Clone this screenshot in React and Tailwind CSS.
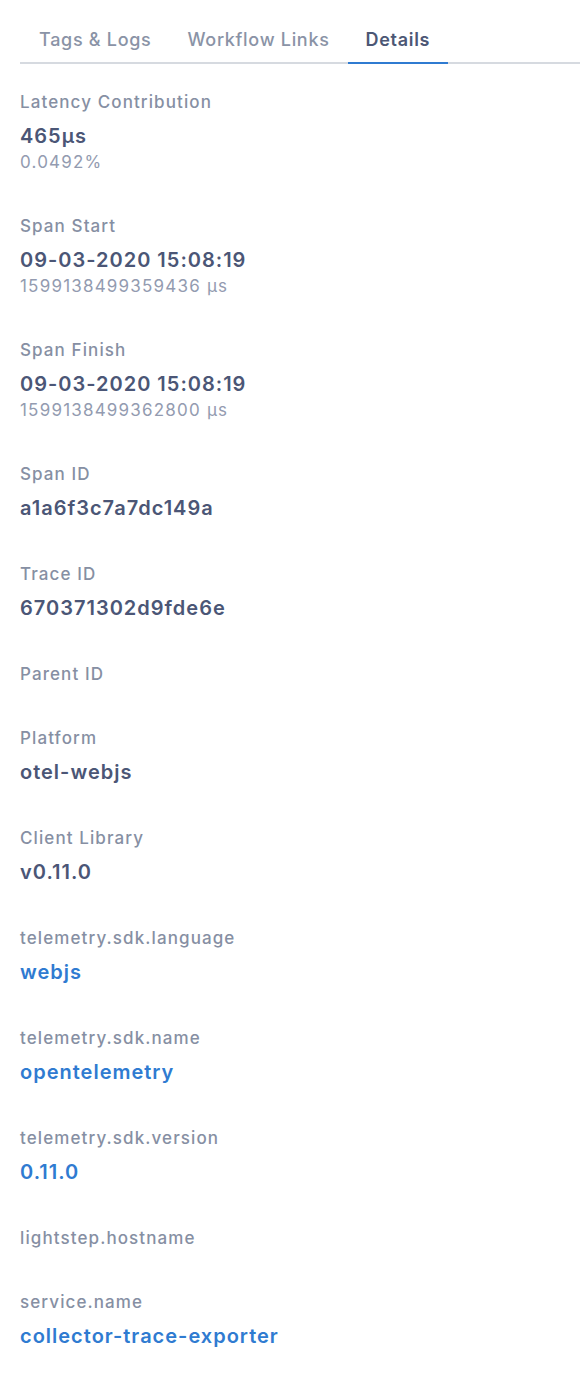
import React from "react";

const items = [
  { label: "Latency Contribution", value: "465µs", sub: "0.0492%" },
  { label: "Span Start", value: "09-03-2020 15:08:19", sub: "1599138499359436 µs" },
  { label: "Span Finish", value: "09-03-2020 15:08:19", sub: "1599138499362800 µs" },
  { label: "Span ID", value: "a1a6f3c7a7dc149a" },
  { label: "Trace ID", value: "670371302d9fde6e" },
  { label: "Parent ID" },
  { label: "Platform", value: "otel-webjs" },
  { label: "Client Library", value: "v0.11.0" },
  { label: "telemetry.sdk.language", value: "webjs", link: true },
  { label: "telemetry.sdk.name", value: "opentelemetry", link: true },
  { label: "telemetry.sdk.version", value: "0.11.0", link: true },
  { label: "lightstep.hostname" },
  { label: "service.name", value: "collector-trace-exporter", link: true },
];

export default function App() {
  return (
    <div
      className="w-[580px] min-h-[1386px] bg-white pl-[20px] pt-[27px]"
      style={{ fontFamily: "Inter, 'Noto Sans', sans-serif" }}
    >
      <div className="flex border-b-2 border-[#d6dae0] h-[37px]">
        <div className="pl-[19px] pr-[18px] text-[18px] font-medium tracking-[0.7px] text-[#8a93a6] leading-[26px]">Tags &amp; Logs</div>
        <div className="px-[18px] text-[18px] font-medium tracking-[0.7px] text-[#8a93a6] leading-[26px]">Workflow Links</div>
        <div className="px-[18px] text-[18px] font-semibold tracking-[0.7px] text-[#4c5775] leading-[26px] border-b-2 border-[#2f7bd1] -mb-[2px]">Details</div>
      </div>
      <div className="pt-[26px] flex flex-col">
        {items.map((it, i) => (
          <div key={i} className="pb-[40px]">
            <div className="text-[17px] font-medium tracking-[1.1px] text-[#868fa3] leading-[24px]">{it.label}</div>
            {it.value && (
              <div
                className={
                  "mt-[9px] text-[20px] font-semibold tracking-[1px] leading-[27px] " +
                  (it.link ? "text-[#2f7bd1]" : "text-[#4b5676]")
                }
              >
                {it.value}
              </div>
            )}
            {it.sub && (
              <div className="text-[17px] tracking-[1.2px] text-[#939bb0] leading-[24px]">{it.sub}</div>
            )}
          </div>
        ))}
      </div>
    </div>
  );
}
